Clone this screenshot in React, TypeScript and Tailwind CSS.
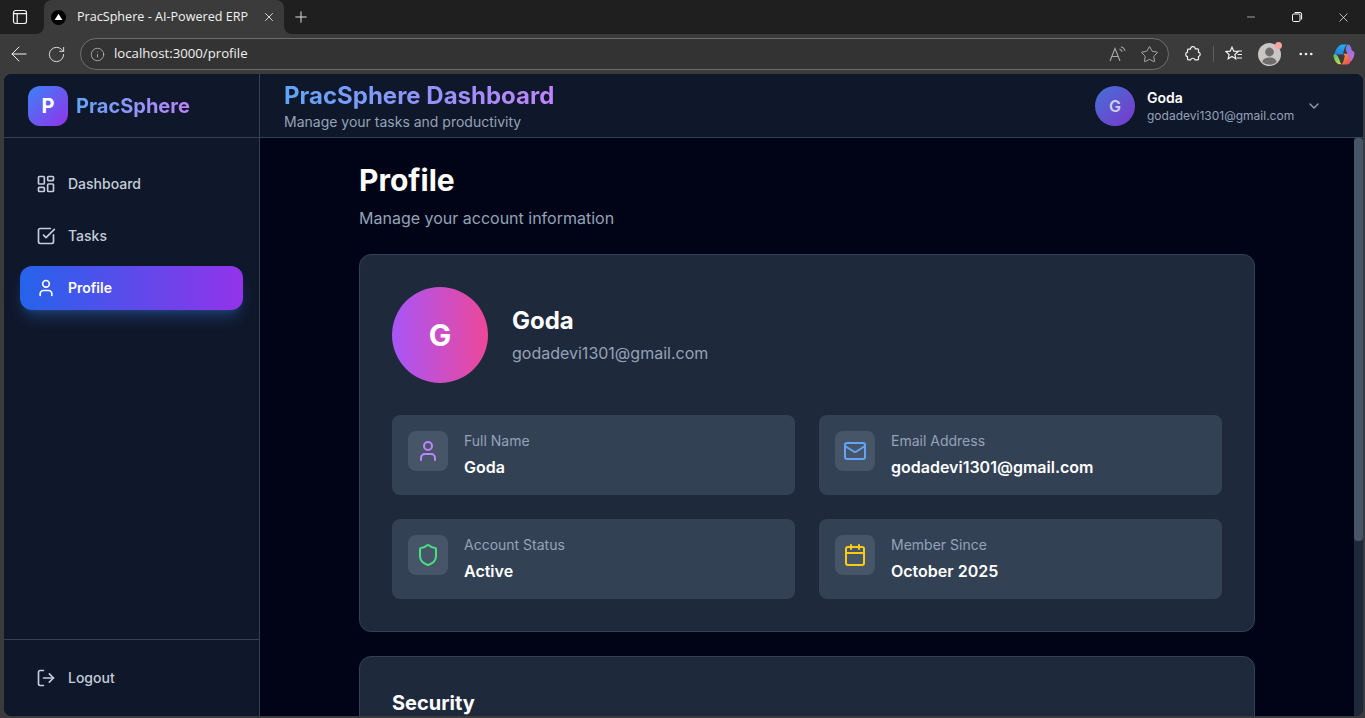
import React from 'react';
import {
  ArrowLeft,
  Calendar,
  ChevronDown,
  Info,
  LayoutDashboard,
  LogOut,
  Mail,
  Minus,
  MoreHorizontal,
  Plus,
  RotateCw,
  Shield,
  SquareCheckBig,
  Star,
  User,
  X,
} from 'lucide-react';

const FONT = "font-['Inter','Noto_Sans',sans-serif]";

function TabStrip() {
  return (
    <div className="flex h-[34px] shrink-0 items-stretch bg-[#1f1f1f] text-white">
      <div className="flex w-[44px] items-center justify-center pr-[4px]">
        {/* vertical tabs button */}
        <svg width="16" height="16" viewBox="0 0 16 16" fill="none" stroke="#f2f2f2" strokeWidth="1.2">
          <rect x="1.5" y="1.5" width="13" height="13" rx="2.2" />
          <path d="M1.5 4.6h13M5.2 4.6v9.9" />
        </svg>
      </div>
      <div className="relative flex w-[240px] items-center rounded-t-lg bg-[#3b3b3b] pl-[7px] pr-[8px]">
        <div className="absolute bottom-0 left-[-8px] h-2 w-2 bg-[#3b3b3b]">
          <div className="h-full w-full rounded-br-lg bg-[#1f1f1f]" />
        </div>
        <div className="absolute bottom-0 right-[-8px] h-2 w-2 bg-[#3b3b3b]">
          <div className="h-full w-full rounded-bl-lg bg-[#1f1f1f]" />
        </div>
        <div className="flex h-[15px] w-[15px] items-center justify-center rounded-full bg-black">
          <svg width="9" height="8" viewBox="0 0 9 8">
            <path d="M4.5 0.8 8.4 7H0.6z" fill="#fff" />
          </svg>
        </div>
        <span className="ml-[11px] flex-1 whitespace-nowrap font-['Open_Sans',sans-serif] text-[12.6px] text-[#f2f2f2]">
          PracSphere - AI-Powered ERP
        </span>
        <X size={14} strokeWidth={1.5} className="text-[#eeeeee]" />
      </div>
      <div className="flex w-[34px] items-center justify-center">
        <Plus size={18} strokeWidth={1.2} className="text-[#f5f5f5]" />
      </div>
      <div className="flex-1" />
      <div className="-mr-px flex items-center">
        <div className="flex w-[46px] justify-center">
          <Minus size={12} strokeWidth={1.2} />
        </div>
        <div className="flex w-[46px] justify-center">
          <svg width="12" height="12" viewBox="0 0 12 12" fill="none" stroke="#fff" strokeWidth="1">
            <rect x="1.5" y="3" width="7.5" height="7.5" rx="1.2" />
            <path d="M3.6 1.5h5.4a1.6 1.6 0 0 1 1.6 1.6v5.4" />
          </svg>
        </div>
        <div className="flex w-[46px] justify-center">
          <X size={15} strokeWidth={1.1} />
        </div>
      </div>
    </div>
  );
}

function ToolBar() {
  return (
    <div className="flex h-[40px] shrink-0 items-center bg-[#3b3b3b] text-[#f2f2f2]">
      <div className="flex w-[38px] justify-center">
        <ArrowLeft size={24} strokeWidth={1} />
      </div>
      <div className="flex w-[36px] justify-center">
        <RotateCw size={19} strokeWidth={1.1} />
      </div>
      <div className="ml-[6px] flex h-[32px] w-[1089px] items-center rounded-full border border-[#6e6e6e] bg-[#333333] pl-[9px] pr-[9px]">
        <Info size={15} strokeWidth={1.2} className="text-[#c4c4c4]" />
        <span className="ml-[9px] flex-1 font-['Open_Sans',sans-serif] text-[13.2px] text-[#f0f0f0]">
          localhost:3000/profile
        </span>
        {/* read aloud */}
        <svg width="18" height="16" viewBox="0 0 18 16" fill="none" stroke="#a8a8a8" strokeWidth="1.1">
          <path d="M1 15 6 2.5 11 15M2.8 10.5h6.4" />
          <path d="M10.4 3c1.4.5 2.4 1.5 2.8 2.9M12 .8c2 .6 3.5 2 4.1 4" />
        </svg>
        <Star size={19} strokeWidth={1.1} className="ml-[13px] text-[#b8b8b8]" />
      </div>
      <div className="ml-[14px] flex w-[20px] justify-center">
        {/* extensions */}
        <svg width="16" height="16" viewBox="0 0 16 16" fill="none" stroke="#f2f2f2" strokeWidth="1.2">
          <path d="M5.5 3.2a2.4 2.4 0 0 1 4.8-.4h2.2a1 1 0 0 1 1 1v2.4a2.2 2.2 0 0 1 0 4.3v2.4a1 1 0 0 1-1 1h-2.5a2.3 2.3 0 0 0-4.4 0H3.5a1 1 0 0 1-1-1v-2.2a2.3 2.3 0 0 1 0-4.5V4a1 1 0 0 1 1-.8z" />
        </svg>
      </div>
      <div className="ml-[10px] mr-[10px] h-[16px] w-px bg-[#5e5e5e]" />
      <div className="flex w-[20px] justify-center">
        {/* favourites */}
        <svg width="18" height="16" viewBox="0 0 18 16" fill="none" stroke="#f2f2f2" strokeWidth="1.2">
          <path d="M7 1.2 8.8 5.2l4.2.4-3.1 2.9.9 4.3L7 10.5l-3.8 2.3.9-4.3L1 5.6l4.2-.4z" />
          <path d="M12.4 5h4.6M12.6 8.5h4.4M11.6 12h5.4" />
        </svg>
      </div>
      <div className="relative ml-[14px] flex h-[23px] w-[23px] items-center justify-center rounded-full bg-[#c9c6c3]">
        <svg width="23" height="23" viewBox="0 0 23 23">
          <circle cx="11.5" cy="9" r="4.4" fill="#6f6d6b" />
          <path d="M4.2 19c1.2-3.6 4-4.6 7.3-4.6s6.1 1 7.3 4.6a11 11 0 0 1-14.6 0z" fill="#6f6d6b" />
        </svg>
        <div className="absolute right-[-1px] top-[-1px] h-[7px] w-[7px] rounded-full bg-[#f4a5a0]" />
      </div>
      <div className="ml-[15px] flex w-[20px] justify-center">
        <MoreHorizontal size={18} strokeWidth={1.6} />
      </div>
      <div className="ml-[17px] flex w-[22px] justify-center">
        <CopilotLogo />
      </div>
    </div>
  );
}

function CopilotLogo() {
  return (
    <svg width="22" height="21" viewBox="0 0 22 21">
      <defs>
        <linearGradient id="cpA" x1="0.8" y1="0" x2="0.2" y2="1">
          <stop offset="0" stopColor="#1fb6e8" />
          <stop offset="1" stopColor="#2a7be0" />
        </linearGradient>
        <linearGradient id="cpB" x1="0" y1="0" x2="1" y2="1">
          <stop offset="0" stopColor="#5a86ec" />
          <stop offset="0.5" stopColor="#a56fe6" />
          <stop offset="1" stopColor="#d86bc4" />
        </linearGradient>
        <linearGradient id="cpC" x1="0" y1="0" x2="1" y2="1">
          <stop offset="0" stopColor="#f2a23a" />
          <stop offset="0.6" stopColor="#f36b46" />
          <stop offset="1" stopColor="#e8456e" />
        </linearGradient>
        <linearGradient id="cpD" x1="0" y1="0" x2="1" y2="1">
          <stop offset="0" stopColor="#3fc07e" />
          <stop offset="1" stopColor="#e8d63a" />
        </linearGradient>
      </defs>
      <path d="M6.5 1.6C7 .9 7.8.6 8.8.6H15c-1.6.2-2.6 1.2-3.2 3L9.6 10.4H1.4C2 7 4 3.4 6.5 1.6z" fill="url(#cpA)" />
      <path d="M15 .6c1.4 0 2.3.9 2.8 2.4l1.1 3.5c1.7.5 2.7 1.7 2.5 3.6-.3 3-1.7 6-4 7.8L13 6.2C12.4 4 13 1.4 15 .6z" fill="url(#cpB)" />
      <path d="M1.4 10c-.5 0-.9.4-.9 1 0 3.6 2 7.4 4.6 9 1 .4 2.4.3 3.1-.2-.6-.8-1-1.6-1.3-2.6L5.6 14c-.5-1.6-1.8-4-4.2-4z" fill="url(#cpD)" />
      <path d="M9.6 9.8h3.8c1 0 1.6.5 1.9 1.4l2.2 6.2c-.5 1.8-1.6 3-3.6 3H7.4c1.8-.3 2.6-1.6 3.1-3.4l1.2-4.3c.2-1.2-.6-2.3-2.1-2.9z" fill="url(#cpC)" />
    </svg>
  );
}

function NavItem({ icon, label, active }: { icon: React.ReactNode; label: string; active?: boolean }) {
  return (
    <div
      className={
        active
          ? 'flex h-[44px] items-center gap-3 rounded-xl bg-linear-to-r/srgb from-[#2563eb] to-[#9333ea] px-4 text-sm font-semibold text-white shadow-[0_10px_15px_-3px_rgba(59,130,246,0.3),0_4px_6px_-4px_rgba(59,130,246,0.3)]'
          : 'flex h-[44px] items-center gap-3 rounded-xl px-4 text-sm font-medium text-[#c4cdd9]'
      }
    >
      {icon}
      {label}
    </div>
  );
}

function Sidebar() {
  return (
    <aside className="flex w-[256px] shrink-0 flex-col border-r border-[#334155] bg-[#0f172a]">
      <div className="flex h-[64px] shrink-0 items-center gap-2 border-b border-[#334155] px-6">
        <div className="flex h-10 w-10 items-center justify-center rounded-xl bg-linear-to-br/srgb from-[#3b82f6] to-[#9333ea] text-xl font-bold text-white">
          P
        </div>
        <span className="bg-linear-to-r/srgb from-[#60a5fa] to-[#c084fc] bg-clip-text text-xl font-bold text-transparent">
          PracSphere
        </span>
      </div>
      <nav className="flex flex-1 flex-col gap-2 px-4 pt-6">
        <NavItem icon={<LayoutDashboard size={20} strokeWidth={2} />} label="Dashboard" />
        <NavItem icon={<SquareCheckBig size={20} strokeWidth={2} />} label="Tasks" />
        <NavItem icon={<User size={20} strokeWidth={2} />} label="Profile" active />
      </nav>
      <div className="border-t border-[#334155] p-4">
        <NavItem icon={<LogOut size={20} strokeWidth={2} />} label="Logout" />
      </div>
    </aside>
  );
}

function TopBar() {
  return (
    <header className="flex h-[64px] shrink-0 items-center justify-between border-b border-[#334155] bg-[#0f172a] pl-6 pr-[41px]">
      <div>
        <div className="bg-linear-to-r/srgb from-[#60a5fa] to-[#c084fc] bg-clip-text text-2xl leading-[32px] font-bold text-transparent">
          PracSphere Dashboard
        </div>
        <div className="text-sm leading-[20px] text-[#94a3b8]">Manage your tasks and productivity</div>
      </div>
      <div className="flex items-center">
        <div className="flex h-10 w-10 items-center justify-center rounded-full bg-linear-to-br/srgb from-[#4470d6] to-[#7a38cc] text-base font-semibold text-[#cdd0e4]">
          G
        </div>
        <div className="ml-3 w-[155px]">
          <div className="text-sm leading-[20px] font-semibold text-white">Goda</div>
          <div className="text-xs leading-[16px] text-[#94a3b8]">godadevi1301@gmail.com</div>
        </div>
        <ChevronDown size={16} className="ml-[4px] text-[#94a3b8]" />
      </div>
    </header>
  );
}

function InfoTile({ icon, label, value }: { icon: React.ReactNode; label: string; value: string }) {
  return (
    <div className="flex h-[80px] items-start gap-4 rounded-lg bg-[#334155] p-4">
      <div className="flex h-10 w-10 shrink-0 items-center justify-center rounded-lg bg-[#475569]">{icon}</div>
      <div>
        <div className="mb-1 text-sm leading-[20px] text-[#94a3b8]">{label}</div>
        <div className="text-base leading-[24px] font-semibold text-white">{value}</div>
      </div>
    </div>
  );
}

function ProfileContent() {
  return (
    <div className="mx-auto w-[896px] pt-6">
      <h1 className="text-3xl leading-[36px] font-bold text-white">Profile</h1>
      <p className="mt-2 mb-6 text-base leading-[24px] text-[#94a3b8]">Manage your account information</p>
      <section className="rounded-xl border border-[#334155] bg-[#1e293b] p-8">
        <div className="mb-8 flex items-center gap-6">
          <div className="flex h-24 w-24 items-center justify-center rounded-full bg-linear-to-r/srgb from-[#a855f7] to-[#ec4899] text-3xl font-bold text-white">
            G
          </div>
          <div>
            <div className="text-2xl leading-[32px] font-bold text-white">Goda</div>
            <div className="mt-1 text-base leading-[24px] text-[#94a3b8]">godadevi1301@gmail.com</div>
          </div>
        </div>
        <div className="grid grid-cols-2 gap-6">
          <InfoTile icon={<User size={24} strokeWidth={2} className="text-[#c084fc]" />} label="Full Name" value="Goda" />
          <InfoTile icon={<Mail size={24} strokeWidth={2} className="text-[#60a5fa]" />} label="Email Address" value="godadevi1301@gmail.com" />
          <InfoTile icon={<Shield size={24} strokeWidth={2} className="text-[#4ade80]" />} label="Account Status" value="Active" />
          <InfoTile icon={<Calendar size={24} strokeWidth={2} className="text-[#facc15]" />} label="Member Since" value="October 2025" />
        </div>
      </section>
      <section className="mt-6 rounded-xl border border-[#334155] bg-[#1e293b] p-8">
        <h2 className="text-xl leading-[28px] font-bold text-white">Security</h2>
      </section>
    </div>
  );
}

export default function App() {
  return (
    <div className={`flex h-screen w-screen flex-col overflow-hidden bg-[#3b3b3b] ${FONT}`}>
      <TabStrip />
      <ToolBar />
      <div className="mb-[2px] ml-[4px] mr-[2px] flex min-h-0 flex-1 overflow-hidden rounded-lg bg-[#010417]">
        <Sidebar />
        <div className="flex min-w-0 flex-1 flex-col">
          <TopBar />
          <div className="flex min-h-0 flex-1">
            <main className="min-w-0 flex-1 overflow-hidden bg-[#010417]">
              <ProfileContent />
            </main>
            <div className="w-[9px] shrink-0 bg-[#1e293b]">
              <div className="h-[403px] rounded-[4px] bg-[#475569]" />
            </div>
          </div>
        </div>
      </div>
    </div>
  );
}
